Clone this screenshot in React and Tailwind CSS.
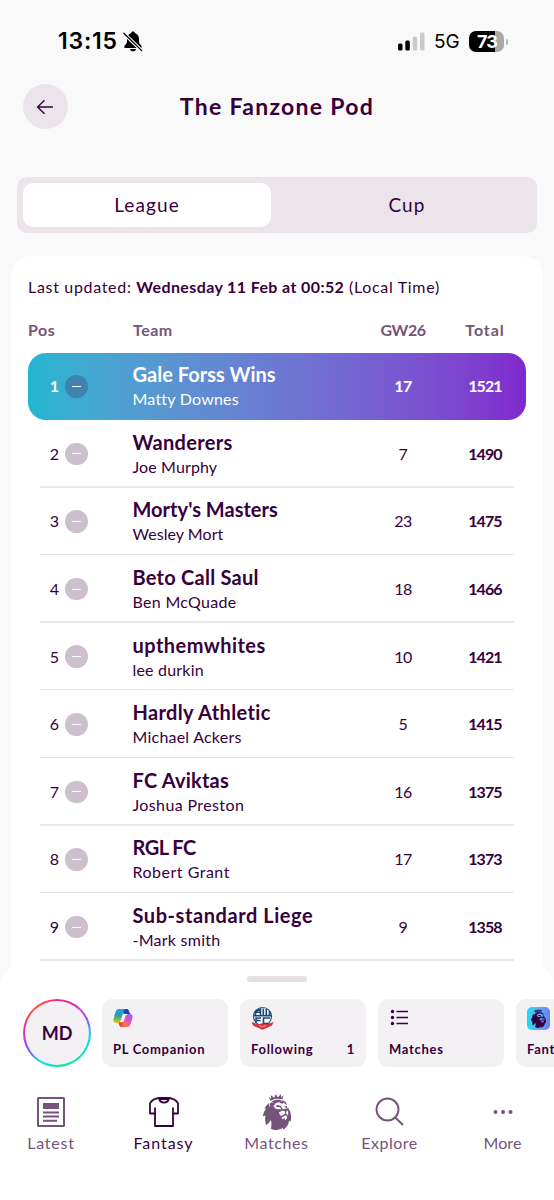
import { SiPremierleague } from "react-icons/si";

const teams = [
  { team: "Gale Forss Wins", manager: "Matty Downes", gw: 17, total: 1521, track: "tracking-[0.02px]", sub: "tracking-[0.22px]" },
  { team: "Wanderers", manager: "Joe Murphy", gw: 7, total: 1490, track: "tracking-[0.3px]", sub: "tracking-[0.12px]" },
  { team: "Morty's Masters", manager: "Wesley Mort", gw: 23, total: 1475, track: "tracking-[0.02px]", sub: "tracking-[0.05px]" },
  { team: "Beto Call Saul", manager: "Ben McQuade", gw: 18, total: 1466, track: "tracking-[0.25px]", sub: "tracking-[0.3px]" },
  { team: "upthemwhites", manager: "lee durkin", gw: 10, total: 1421, track: "tracking-[0.45px]", sub: "tracking-[0.2px]" },
  { team: "Hardly Athletic", manager: "Michael Ackers", gw: 5, total: 1415, track: "tracking-[0.36px]", sub: "tracking-[0.22px]" },
  { team: "FC Aviktas", manager: "Joshua Preston", gw: 16, total: 1375, track: "tracking-[0.2px]", sub: "tracking-[0.38px]" },
  { team: "RGL FC", manager: "Robert Grant", gw: 17, total: 1373, track: "tracking-[-0.5px]", sub: "tracking-[0.5px]" },
  { team: "Sub-standard Liege", manager: "-Mark smith", gw: 9, total: 1358, track: "tracking-[0.56px]", sub: "tracking-[0.25px]" },
];

const App = () => {
  return (
    <div className="w-[554px] h-[1200px] overflow-hidden flex flex-col bg-[#f9f9f9] text-[#37003c] font-['Lato',sans-serif]">
      <StatusBar />

      {/* Header */}
      <header className="h-[45px] mt-[18px] px-[23px] grid grid-cols-[45px_1fr_45px] items-center shrink-0">
        <button className="size-[45px] pr-0.5 rounded-full bg-[#ebe5eb] flex items-center justify-center">
          <svg width="18" height="16" viewBox="0 0 18 16" fill="none" stroke="currentColor" strokeWidth="1.4">
            <path d="M17 8H1.5M8.500 1.200 1.600 8l6.900 6.800" />
          </svg>
        </button>
        <h1 className="text-center text-[23px] font-bold tracking-[1.3px] whitespace-nowrap">
          The Fanzone Pod
        </h1>
      </header>

      {/* League / Cup switch */}
      <div className="mt-12 mx-[17px] h-14 p-1.5 rounded-[10px] bg-[#ebe4ea] flex shrink-0 text-[19px] tracking-[1.1px]">
        <div className="w-[248px] rounded-[10px] bg-white flex items-center justify-center">
          League
        </div>
        <div className="flex-1 flex items-center justify-center pl-3">Cup</div>
      </div>

      {/* Standings */}
      <main className="mt-[23px] mx-[11px] px-[17px] pt-[19px] h-[709px] rounded-t-[20px] bg-white shrink-0">
        <p className="h-6 leading-6 text-[16px] whitespace-nowrap tracking-[0.68px]">
          Last updated:{" "}
          <b className="tracking-[0.38px]">Wednesday 11 Feb at 00:52</b>{" "}
          (Local Time)
        </p>
        <div className="mt-[19px] h-6 flex items-center text-[16px] font-bold text-[#765478] tracking-[0.5px]">
          <span className="w-[105px]">Pos</span>
          <span className="flex-1">Team</span>
          <span className="w-[82px] text-center tracking-[-0.5px]">GW26</span>
          <span className="w-[82px] text-center tracking-[0.9px]">Total</span>
        </div>
        <div className="mt-[10.500px]">
          {teams.map((row, i) => (
            <TeamRow key={row.team} row={row} pos={i + 1} />
          ))}
        </div>
      </main>

      <BottomSheet />
    </div>
  );
};

export default App;

const StatusBar = () => (
  <div className="h-[66px] pt-[17px] pl-[58px] pr-[46px] flex items-center shrink-0 text-black font-['Inter',sans-serif]">
    <span className="w-[60px] text-[23px] font-semibold tracking-[0.8px] whitespace-nowrap">13:15</span>
    <svg className="ml-[5px]" width="20" height="21" viewBox="0 0 20 21">
      <path
        d="M10 .4c-1 0-1.800.7-1.900 1.600C5.500 2.900 4 5.200 4 8v3.300c0 1.200-2.800 3-2.800 4.800 0 .6.4.9 1 .9h15.600c.6 0 1-.3 1-.9 0-1.800-2.800-3.600-2.800-4.800V8c0-2.800-1.500-5.100-4.100-6C11.800 1.100 11 .4 10 .4M7 18h6c-.3 1.400-1.500 2.300-3 2.300S7.300 19.400 7 18"
      />
      <path d="M.5 2 19 20" stroke="#f9f9f9" strokeWidth="3.400" />
      <path d="M.8 2.200 18.700 19.600" stroke="black" strokeWidth="1.300" strokeLinecap="round" />
    </svg>
    <svg className="ml-auto" width="28" height="19" viewBox="0 0 28 19">
      <rect x="0" y="11.500" width="4.500" height="7" rx="1.500" />
      <rect x="7.300" y="8.500" width="4.500" height="10" rx="1.500" />
      <rect x="14.700" y="4.500" width="4.500" height="14" rx="1.500" fill="#cacaca" />
      <rect x="22" y="0.500" width="4.500" height="18" rx="1.500" fill="#cacaca" />
    </svg>
    <span className="ml-[8px] w-[28px] pt-[2px] text-[19px]">5G</span>
    <div className="ml-[7px] w-[35px] h-[21px] pl-[1px] rounded-[7px] bg-linear-to-r from-black from-74% to-[#aaa] to-74% text-white text-[18px] font-bold leading-[21px] text-center tracking-[-1px]">
      73
    </div>
    <div className="ml-[2px] w-[2px] h-[6px] rounded-r-full bg-[#b5b5b5]" />
  </div>
);

const TeamRow = ({ row, pos }) => {
  const first = pos === 1;
  return (
    <div
      className={`relative h-[67.6px] w-[498px] flex items-center ${
        first
          ? "rounded-[18px] bg-linear-to-r from-[#1fb7d0] via-[#6b79d2] to-[#8028cd] text-white"
          : ""
      }`}
    >
      <span className={`w-[31px] text-right text-[16px] ${first ? "font-bold" : ""}`}>
        {pos}
      </span>
      <span
        className={`ml-[6px] size-[22.500px] rounded-full flex items-center justify-center ${
          first ? "bg-[#3e82ad]" : "bg-[#cdbfce]"
        }`}
      >
        <i className="w-[9px] h-px bg-white" />
      </span>
      <div className="ml-[45px] pt-px flex-1 whitespace-nowrap">
        <div className={`h-[25px] leading-[25px] text-[20px] font-bold ${row.track}`}>
          {row.team}
        </div>
        <div className={`h-6 leading-6 text-[16px] ${row.sub}`}>{row.manager}</div>
      </div>
      <span className={`w-[82px] text-center text-[16px] tracking-[-0.5px] ${first ? "font-bold" : ""}`}>
        {row.gw}
      </span>
      <span className="w-[82px] text-center text-[16px] font-bold tracking-[-0.9px]">
        {row.total}
      </span>
      {!first && (
        <i className="absolute left-3 right-3 bottom-0 h-[1.5px] bg-[#e9e6e9]" />
      )}
    </div>
  );
};

const BottomSheet = () => (
  <footer className="relative -mt-0.5 h-[237px] shrink-0 rounded-t-[24px] bg-white">
    <div className="pt-[13px] flex justify-center">
      <i className="w-[60px] h-[6px] rounded-full bg-[#e6dfe6]" />
    </div>
    <div className="mt-[17px] ml-[23px] flex gap-3 overflow-hidden">
      <div className="size-[68px] -mr-px shrink-0 rounded-full p-[2px] bg-[conic-gradient(from_0deg,#f0208c,#d838cc_13%,#8b51f5_18%,#08d6f5_27%,#05e4c0_37%,#08e898_48%,#0bdce3_58%,#547bf5_64%,#9544f5_69%,#f22da0_77%,#fa4052_84%,#fa6130_90%,#f0208c)]">
        <div className="size-full rounded-full bg-[#f3f1f4] flex items-center justify-center text-[18px] font-bold">
          MD
        </div>
      </div>
      <Shortcut label="PL Companion">
        <CompanionIcon />
      </Shortcut>
      <Shortcut label="Following" count="1">
        <BoltonCrest />
      </Shortcut>
      <Shortcut label="Matches">
        <svg width="20" height="22" viewBox="0 0 20 22" stroke="currentColor" strokeWidth="1.400" fill="currentColor">
          <path d="M7.500 4.500H19M7.500 10.500H19M7.500 16.500H19" />
          <g stroke="none">
            <circle cx="3.500" cy="4.500" r="1.700" />
            <circle cx="3.500" cy="10.500" r="1.700" />
            <circle cx="3.500" cy="16.500" r="1.700" />
          </g>
        </svg>
      </Shortcut>
      <Shortcut label="Fantasy">
        <div className="size-[23px] rounded-[5px] bg-linear-to-r from-[#10dcfa] to-[#6c7df0] flex items-center justify-center">
          <SiPremierleague size={19} />
        </div>
      </Shortcut>
    </div>

    {/* Tab bar */}
    <nav className="mt-[27px] flex text-[16px] text-[#75537a]">
      <NavItem label="Latest" track="tracking-[0.8px]">
        <svg width="28" height="30" viewBox="0 0 28 30" fill="none" stroke="currentColor" strokeWidth="2">
          <rect x="1" y="1" width="26" height="28" rx="0.500" />
          <path d="M6 6h16v6H6z" fill="currentColor" stroke="none" />
          <path d="M6 15.500h16M6 19.500h16M6 23.800h14" />
        </svg>
      </NavItem>
      <NavItem label="Fantasy" track="tracking-[0.95px]" active>
        <svg width="32" height="30" viewBox="0 0 32 30" fill="none" stroke="currentColor" strokeWidth="1.800" strokeLinejoin="round">
          <path d="M11 1h10c4 .5 7.500 2.500 9 5.300v10.200h-5V29H7V16.500H2V6.300C3.500 3.500 7 1.500 11 1Z" />
          <path d="M7 17v-6.500M25 17v-6.500M11 1c.5 3 2.500 4.600 5 4.600S20.500 4 21 1M11.500 2h9" />
        </svg>
      </NavItem>
      <NavItem label="Matches" track="tracking-[0.6px]">
        <SiPremierleague size={36} />
      </NavItem>
      <NavItem label="Explore" track="tracking-[0.5px]">
        <svg width="30" height="30" viewBox="0 0 30 30" fill="none" stroke="currentColor" strokeWidth="1.900">
          <circle cx="12.500" cy="12.500" r="11" />
          <path d="m20 20.300 8 7.700" />
        </svg>
      </NavItem>
      <NavItem label="More" track="tracking-[0.1px]">
        <svg width="20" height="6" viewBox="0 0 20 6" fill="currentColor">
          <circle cx="2.500" cy="3" r="2" />
          <circle cx="10" cy="3" r="2" />
          <circle cx="17.500" cy="3" r="2" />
        </svg>
      </NavItem>
    </nav>
  </footer>
);

const Shortcut = ({ label, count, children }) => (
  <div className="w-[126px] h-[68px] shrink-0 rounded-[10px] bg-[#f3f1f4] px-[11px] pt-[7px] flex flex-col">
    <div className="h-[24px] flex items-center">{children}</div>
    <div className="mt-[9px] h-5 leading-5 flex justify-between text-[13px] font-bold tracking-[0.7px] whitespace-nowrap">
      <span>{label}</span>
      <span>{count}</span>
    </div>
  </div>
);

const NavItem = ({ label, track, active, children }) => (
  <div className={`w-[113px] first:w-[107px] first:pr-[5px] shrink-0 flex flex-col items-center ${active ? "text-[#37003c]" : ""}`}>
    <div className="h-9 flex items-center">{children}</div>
    <span className={`mt-px h-6 leading-6 ${track}`}>{label}</span>
  </div>
);

const CompanionIcon = () => (
  <svg width="22" height="21" viewBox="0 0 22 21">
    <defs>
      <linearGradient id="cool" x1="0" y1="0" x2="0" y2="1">
        <stop offset="0" stopColor="#16a9e8" />
        <stop offset="0.450" stopColor="#279ab8" />
        <stop offset="0.700" stopColor="#71b650" />
        <stop offset="1" stopColor="#e4c928" />
      </linearGradient>
      <linearGradient id="warm" x1="0.800" y1="0" x2="0.200" y2="1">
        <stop offset="0" stopColor="#a25cee" />
        <stop offset="0.500" stopColor="#e05ab3" />
        <stop offset="0.800" stopColor="#fa735b" />
        <stop offset="1" stopColor="#ef6430" />
      </linearGradient>
    </defs>
    <path d="M8 1h6c2.500 0 2 5 4 5h-7z" fill="#1745b5" />
    <path d="M5 14h7l-2 5H8c-2 0-2-5-4-5z" fill="#e8482c" />
    <path d="M5.500 1H13c-2 0-2.500 2-3 4l-2 7c-.7 2-1.500 3-4 3H3c-2 0-3-1.500-2.400-4L2.500 4c.7-2 1.500-3 3-3" fill="url(#cool)" />
    <path d="M14.500 19H7c2 0 2.500-2 3-4l2-6c.7-2 1.500-3 4-3h1c2 0 3 1.500 2.400 4L17.500 16c-.7 2-1.500 3-3 3" fill="url(#warm)" />
    <path d="M10.500 6h4c-1.500.5-2 1.500-2.500 3l-1.300 4c-.4 1-1 1.300-2.200 1.300H6.500c1-.5 1.300-1.300 1.700-2.300L9.500 8c.3-1 .5-1.500 1-2" fill="#f3f1f4" />
  </svg>
);

const BoltonCrest = () => (
  <svg width="23" height="24" viewBox="0 0 23 24" fill="none">
    <circle cx="11.500" cy="10.500" r="9" fill="white" stroke="#245485" strokeWidth="1.200" />
    <g stroke="#174879" strokeWidth="1.600">
      <path d="M4.500 9V5.500L9.500 3v6.200M4.500 6.200h5M12.300 2.500v6.700M15.300 3v6.200M18.500 5v4.200" />
      <path d="M2.500 9.700h18" />
      <path d="M10 12H5v5m0-2.500h4.500M19 12h-6.500v5.500h5" />
    </g>
    <path d="m.5 16 7 2.500 4-1.500 4 1.500 7-2.500-1.500 3.500-9.500 4.300L2 19.500z" fill="#dc3038" />
    <path d="m8 19.300 3.500 1.500 3.500-1.500" stroke="#f7b5b5" strokeWidth="0.800" />
  </svg>
);
